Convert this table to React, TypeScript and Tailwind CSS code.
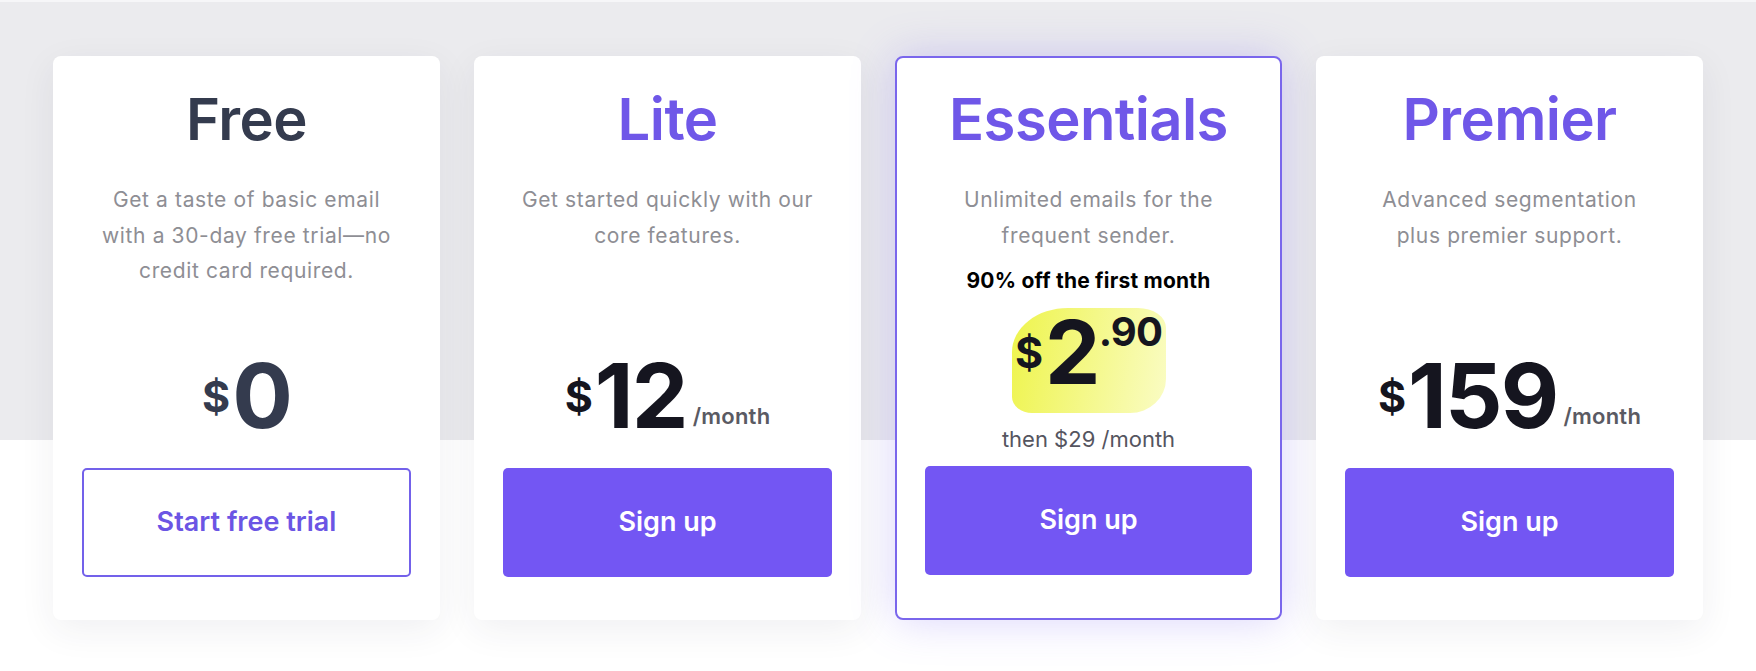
import React from 'react'

type Plan = {
  name: string
  desc: string[]
  price: string
  perMonth: boolean
  cta: string
  muted?: boolean
  featured?: boolean
}

const plans: Plan[] = [
  {
    name: 'Free',
    desc: ['Get a taste of basic email', 'with a 30-day free trial—no', 'credit card required.'],
    price: '0',
    perMonth: false,
    cta: 'Start free trial',
    muted: true,
  },
  {
    name: 'Lite',
    desc: ['Get started quickly with our', 'core features.'],
    price: '12',
    perMonth: true,
    cta: 'Sign up',
  },
  {
    name: 'Essentials',
    desc: ['Unlimited emails for the', 'frequent sender.'],
    price: '2',
    perMonth: true,
    cta: 'Sign up',
    featured: true,
  },
  {
    name: 'Premier',
    desc: ['Advanced segmentation', 'plus premier support.'],
    price: '159',
    perMonth: true,
    cta: 'Sign up',
  },
]

function Price({ plan }: { plan: Plan }) {
  const color = plan.muted ? 'text-[#343b4e]' : 'text-[#15151f]'
  return (
    <div className={`mt-auto mb-[27px] flex items-center justify-center ${color}`}>
      <span className="text-[43px] font-bold leading-none">$</span>
      <span className="ml-[2px] text-[90px] font-bold leading-[90px] tracking-[-0.02em]">{plan.price}</span>
      {plan.perMonth && (
        <span className="mb-[14px] ml-[6px] self-end text-[22px] font-semibold leading-[22px] tracking-[0.01em] text-[#5a5a63]">
          /month
        </span>
      )}
    </div>
  )
}

function PromoPrice() {
  return (
    <div className="mt-auto mb-[12px] flex flex-col items-center">
      <p className="text-[21px] font-bold leading-[28px] tracking-[0.01em] text-black">90% off the first month</p>
      <div className="mt-[13px] flex h-[105px] w-[154px] items-start justify-center rounded-[56px_28px_36px_20px/44px_20px_34px_16px] bg-[linear-gradient(100deg,#eef44c,#fafcc4)] text-[#15151f]">
        <span className="mb-[17px] self-center text-[43px] font-bold leading-none">$</span>
        <span className="ml-[2px] text-[88px] font-bold leading-[88px] tracking-[-0.02em]">2</span>
        <span className="mt-[4px] text-[40px] font-bold leading-[40px] tracking-[-0.02em]">.90</span>
      </div>
      <p className="mt-[11px] text-[22px] leading-[30px] text-[#55555f]">then $29 /month</p>
    </div>
  )
}

function PlanCard({ plan }: { plan: Plan }) {
  const card = plan.featured
    ? 'border-2 border-[#7a66ec] px-[28px] pt-[32px] shadow-[0_0_44px_rgba(118,96,240,0.28)]'
    : 'px-[29px] pt-[34px] shadow-[0_10px_36px_rgba(40,40,70,0.07)]'
  return (
    <div className={`flex h-[564px] flex-col items-center rounded-lg bg-white pb-[43px] ${card}`}>
      <h2
        className={`text-[58px] font-semibold leading-[58px] tracking-[-0.01em] ${
          plan.muted ? 'text-[#343b4e]' : 'text-[#6f57e8]'
        }`}
      >
        {plan.name}
      </h2>
      <p className="mt-[34px] text-center text-[21px] leading-[35.5px] tracking-[0.03em] text-[#8e8e94]">
        {plan.desc.map((line, i) => (
          <span key={i} className="block whitespace-nowrap">
            {line}
          </span>
        ))}
      </p>

      {plan.featured ? <PromoPrice /> : <Price plan={plan} />}

      {plan.muted ? (
        <button className="h-[109px] w-full shrink-0 rounded-[5px] border-2 border-[#7361ea] bg-white text-[27px] font-semibold text-[#6b55e4]">
          {plan.cta}
        </button>
      ) : (
        <button className="h-[109px] w-full shrink-0 rounded-[5px] bg-[#7356f3] text-[27px] font-semibold text-white">
          {plan.cta}
        </button>
      )}
    </div>
  )
}

export default function App() {
  return (
    <div className="min-h-[671px] w-full bg-[linear-gradient(to_bottom,#f6f6f8_0px,#f6f6f8_2px,#ebebee_2px,#ebebee_440px,#ffffff_440px)] font-['Inter',sans-serif]">
      <div className="grid grid-cols-4 gap-[34px] px-[53px] pt-[56px]">
        {plans.map((plan) => (
          <PlanCard key={plan.name} plan={plan} />
        ))}
      </div>
    </div>
  )
}
